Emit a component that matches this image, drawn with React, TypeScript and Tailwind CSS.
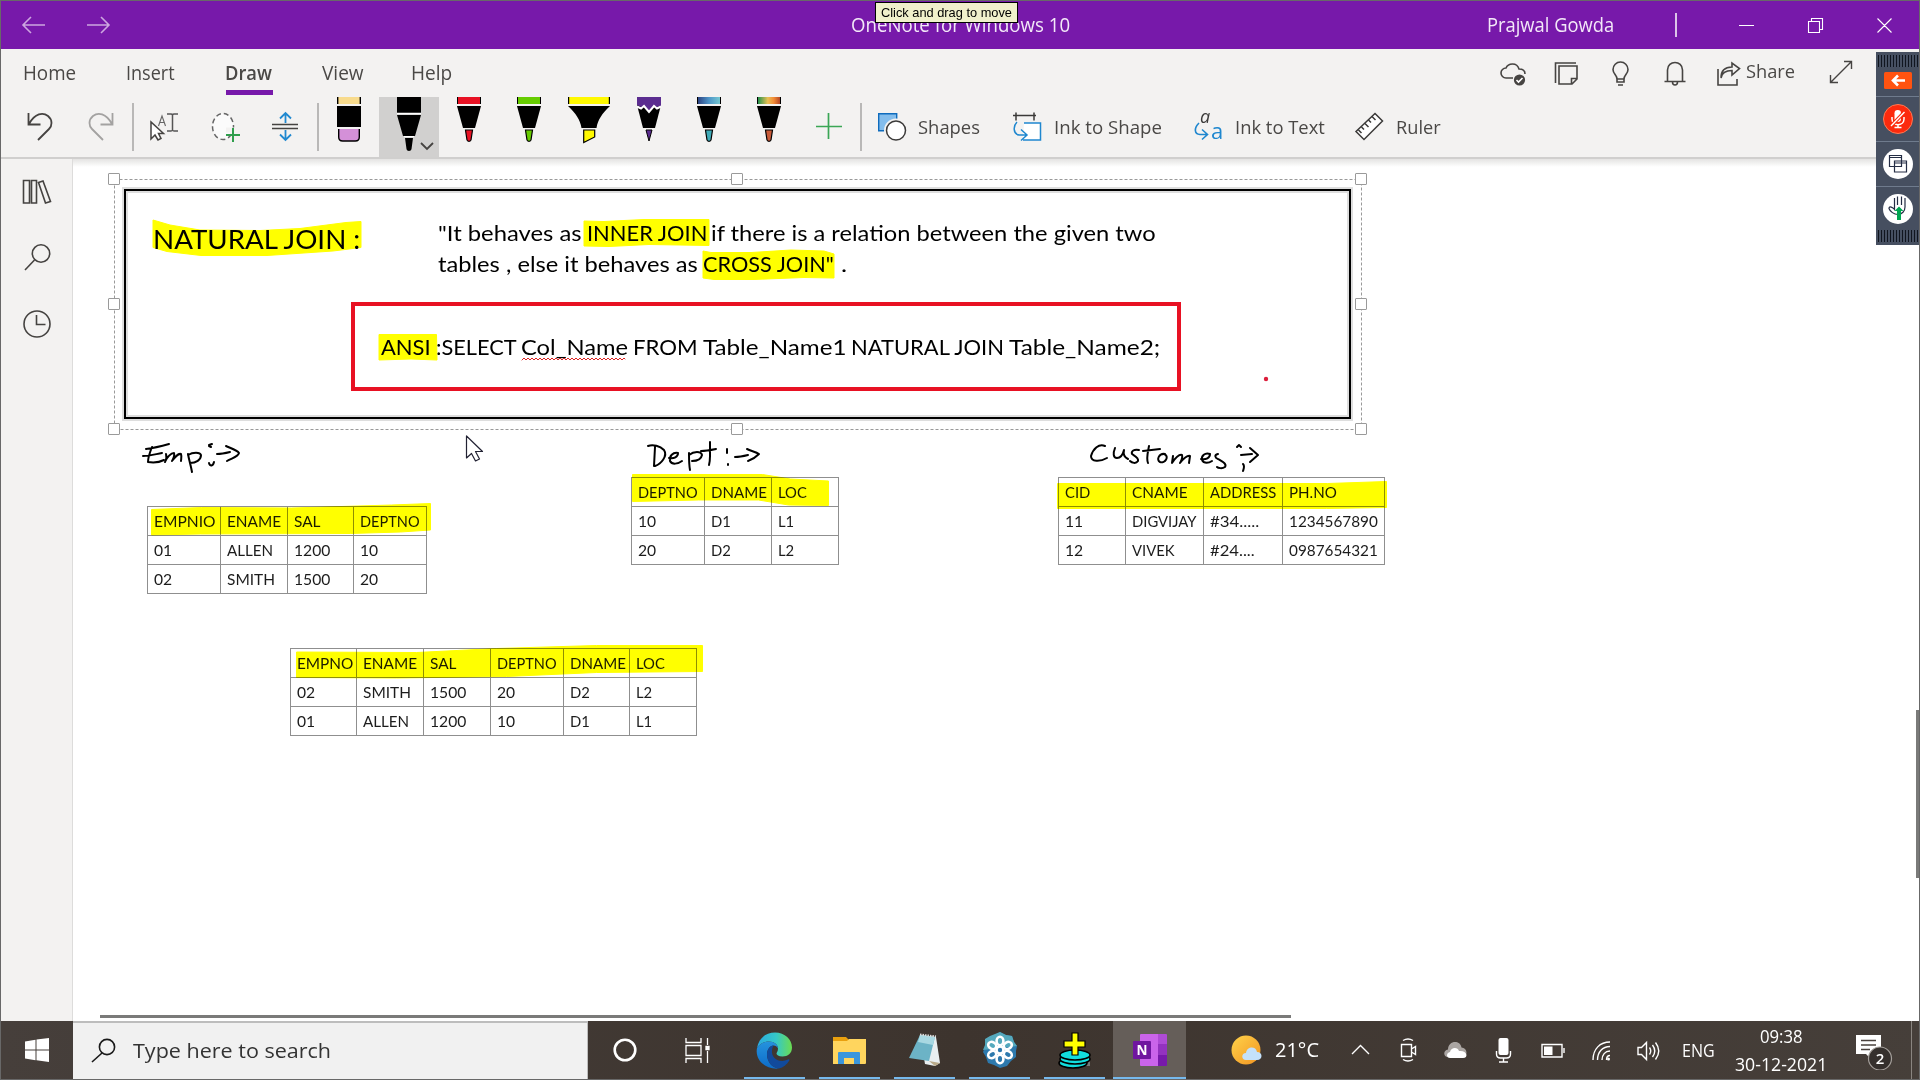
import { useLayoutEffect, useRef, useState, type ReactNode } from "react";

const UI = "font-['Open_Sans',sans-serif]";
const NOTE = "font-['Lato',sans-serif]";

/** One line of text condensed or widened to an exact advance width. */
function Fit({ w, className = "", children }: { w: number; className?: string; children: string }) {
  const ref = useRef<HTMLSpanElement>(null);
  const [scale, setScale] = useState(1);
  useLayoutEffect(() => {
    const measure = () => {
      if (ref.current && ref.current.offsetWidth) setScale(w / ref.current.offsetWidth);
    };
    measure();
    document.fonts?.ready.then(measure);
  }, [w, children]);
  return (
    <span className={`block shrink-0 whitespace-nowrap ${className}`} style={{ width: w }}>
      <span ref={ref} className="inline-block origin-left" style={{ transform: `scaleX(${scale})` }}>
        {children}
      </span>
    </span>
  );
}

/** An item placed freely on the note canvas, in window coordinates. */
function Place({ x, y, children }: { x: number; y: number; children: ReactNode }) {
  return (
    <div className="absolute" style={{ left: x - 73, top: y - 159 }}>
      {children}
    </div>
  );
}

function NoteLine({ x, base, w, big, children }: { x: number; base: number; w: number; big?: boolean; children: string }) {
  return (
    <Place x={x} y={base - (big ? 26 : 22)}>
      <Fit w={w} className={`${NOTE} text-black ${big ? "text-[26.5px] leading-[32px]" : "text-[21.5px] leading-[27px]"}`}>
        {children}
      </Fit>
    </Place>
  );
}

type Cell = [string, number];

function NoteTable({ cols, rows }: { cols: string; rows: Cell[][] }) {
  return (
    <div className={`grid border-t border-l border-[#8f8f8f] ${cols}`}>
      {rows.flat().map(([t, w], i) => (
        <div key={i} className="flex h-[29px] items-center border-r border-b border-[#8f8f8f] pl-[6px]">
          <Fit w={w} className={`${NOTE} text-[14.8px] leading-[20px] text-[#1c1c1c]`}>
            {t}
          </Fit>
        </div>
      ))}
    </div>
  );
}

function TitleBar() {
  return (
    <header className={`relative flex h-[48px] shrink-0 items-center bg-[#7719aa] text-[19.5px] text-[#f3e8f8] ${UI}`}>
      <svg className="ml-[20px]" width="90" height="20" viewBox="0 0 90 20" fill="none" stroke="#cda6e0" strokeWidth="1.6">
        <path d="M24 10H2M10 2L2 10l8 8M66 10h22M80 2l8 8-8 8" />
      </svg>
      <Fit w={219} className="ml-[740px]">OneNote for Windows 10</Fit>
      <Fit w={127} className="ml-[417px]">Prajwal Gowda</Fit>
      <div className="ml-[61px] h-6 w-[2px] bg-[#dcc4e8]" />
      <svg className="ml-[61px]" width="156" height="18" viewBox="1739 16 156 18" fill="none" stroke="#fff" strokeWidth="1.1">
        <path d="M1740 25.5h15M1809.500 21.500h11v11h-11zM1812.500 21v-2.500h11v11h-3M1878.500 18.500l14 14M1892.500 18.500l-14 14" />
      </svg>
      <div className="absolute top-px left-[874px] flex h-[21px] w-[117px] items-center border border-black bg-[#f0f0cb] pl-[5px] font-['Liberation_Sans',sans-serif] text-[13px] leading-[16px] text-black min-w-[143px]">
        <Fit w={131}>Click and drag to move</Fit>
      </div>
    </header>
  );
}

function TabRow() {
  return (
    <div className={`flex h-[48px] items-start pt-[10px] text-[19.5px] leading-[27px] text-[#4a4846] ${UI}`}>
      <Fit w={53} className="ml-[22px]">Home</Fit>
      <Fit w={49} className="ml-[50px]">Insert</Fit>
      <div className="ml-[50px] w-[48px]">
        <Fit w={47} className="font-semibold">Draw</Fit>
        <div className="mt-[4px] ml-[1px] h-[5px] w-[47px] bg-[#7719aa]" />
      </div>
      <Fit w={42} className="ml-[49px]">View</Fit>
      <Fit w={41} className="ml-[47px]">Help</Fit>
      <svg className="ml-[1047px] shrink-0" width="244" height="30" viewBox="1498 58 244 30" fill="none" stroke="#464442" strokeWidth="1.6">
        <path d="M1512 77h-7a5 5 0 0 1 0-10c2-5 11-6 13 1 5 0 6 3 6 5" />
        <circle cx="1518.500" cy="79" r="5.600" fill="#464442" stroke="none" />
        <path d="M1515.500 79l2 2 4-4" stroke="#fff" />
        <path d="M1575 62h-20.500v20M1558 65h18v13l-5 5h-13zM1570.500 83v-5.500h6" />
        <path d="M1616 78c0-4-4-5-4-9.500a7.500 7.500 0 0 1 15 0c0 4.500-4 5.500-4 9.500zM1616 78v3h7v-3M1617 84h5" />
        <path d="M1663.500 80.500h21M1666.500 80v-11c0-10 15-10 15 0v11M1671.500 81c0 4 5 4 5 0" />
        <path d="M1717 68v16h19v-6M1720 77c1-6 5-7.500 11-7.500v4.500l7.500-6.500-7.500-5.500v4c-8 0-11 5-11 11z" />
      </svg>
      <Fit w={49} className="ml-[3px] text-[19px] leading-[25px]">Share</Fit>
      <svg className="ml-[33px]" width="26" height="26" viewBox="1827 60 26 26" fill="none" stroke="#464442" strokeWidth="1.4">
        <path d="M1829.500 83.500l21-21M1843 62.500h7.500v7.500M1829.500 76v7.500h7.500" />
      </svg>
    </div>
  );
}

function Pen({ top, tip }: { top: string; tip: string }) {
  return (
    <svg width="60" height="60" viewBox="0 0 60 60">
      <path d="M18 0h24v7H18z" fill={top} />
      <path d="M18.500 0v7M41.500 0v7" stroke="#000" />
      <path d="M18 9h24l-6 22H24z" />
      <path d="M26.500 33h7l-1.500 10c-.3 1.700-3.700 1.700-4 0z" fill={tip} stroke="#000" strokeWidth="1.200" />
    </svg>
  );
}

function Label({ w, children }: { w: number; children: string }) {
  return (
    <Fit w={w} className={`text-[19px] leading-[27px] text-[#4a4846] ${UI}`}>
      {children}
    </Fit>
  );
}

function ToolRow() {
  return (
    <div className="flex h-[60px] items-start">
      <svg width="131" height="60" viewBox="1 97 131 60" fill="none" strokeWidth="1.800">
        <path d="M28.500 113v11.500h12M29 124c6-11 14-12 19-8 5 4 4 10 1 13l-11 11" stroke="#454341" />
        <path d="M112.500 113v11.500h-12M112 124c-6-11-14-12-19-8-5 4-4 10-1 13l11 11" stroke="#a3a2a1" />
      </svg>
      <div className="mt-[6px] h-[48px] w-[2px] bg-[#b9b8b7]" />
      <svg width="183" height="60" viewBox="134 97 183 60" fill="none" strokeWidth="1.500">
        <path d="M151 122v17l4-4 3 5 3-1.500-2.500-5h5z" stroke="#454341" fill="#fff" />
        <path d="M158.500 126l3.500-10 3.500 10M160 122.500h4.500" stroke="#666" strokeWidth="1.100" />
        <path d="M167 114h4q1 0 1.500 1 .5-1 1.500-1h4M172.500 115v15M167 131h4q1 0 1.500-1 .5 1 1.500 1h4" stroke="#555" />
        <ellipse cx="223" cy="126.500" rx="10.500" ry="13" stroke="#666" fill="#fbfbfb" strokeDasharray="5 3" />
        <path d="M226 132.500h14v-5h-14z" fill="#f3f2f1" />
        <path d="M226 135h14M233 128v14" stroke="#2f9e4c" strokeWidth="2" />
        <path d="M272 124.500h26M272 128.500h26" stroke="#454341" />
        <path d="M285.500 123v-10M280 118.500l5.500-5.500 5.500 5.500M285.500 130v10M280 134.500l5.500 5.500 5.500-5.500" stroke="#2189d0" strokeWidth="1.800" />
      </svg>
      <div className="mt-[6px] h-[48px] w-[2px] bg-[#b9b8b7]" />
      <svg width="60" height="60" viewBox="0 0 60 60">
        <path d="M18 0h24v7H18z" fill="#f8db8d" />
        <path d="M18.700 0v7M41.300 0v7" stroke="#000" strokeWidth="1.400" />
        <path d="M18 9h24v21H18z" />
        <path d="M19.700 32h20.600v8q0 4-4 4H23.700q-4 0-4-4z" fill="#d490d8" />
        <path d="M19.700 32v8q0 4 4 4h12.600q4 0 4-4v-8" fill="none" stroke="#000" strokeWidth="1.400" />
      </svg>
      <div className="bg-[#d1d0cf]">
        <svg width="60" height="60" viewBox="0 0 60 60">
          <path d="M18 0h24v16H18z" />
          <path d="M18 16.500h24M25 39.500h10" stroke="#fff" strokeWidth="1.500" />
          <path d="M18 18h24l-6 21H24zM26 41h8l-1.500 11c-.3 2.500-4.700 2.500-5 0z" />
          <path d="M42 46l6 6 6-6" fill="none" stroke="#454341" strokeWidth="1.800" />
        </svg>
      </div>
      <Pen top="#e81123" tip="#e81123" />
      <Pen top="#66cc00" tip="#66cc00" />
      <svg width="60" height="60" viewBox="0 0 60 60">
        <path d="M9 0h42v7H9z" fill="#fff900" />
        <path d="M9.600 0v7M50.400 0v7" stroke="#000" strokeWidth="1.200" />
        <path d="M9 9h42c-8 8-12 13-13.500 22h-15C21 22 17 17 9 9z" />
        <path d="M24.700 33h11v7l-11 5.500z" fill="#fff900" stroke="#000" strokeWidth="1.200" />
      </svg>
      <svg width="60" height="60" viewBox="0 0 60 60">
        <path d="M18 8l24 0-6 23H24z" />
        <path d="M18 0h24v9l-4 1-3-1-5 6-5-6-3 1-4-2z" fill="#5b2d90" />
        <path d="M18 9.500l4 2 3-2.500 5 6 5-6 3 2.500 4-2" fill="none" stroke="#fff" strokeWidth="2" />
        <path d="M27 33h6l-3 11z" fill="#5b2d90" stroke="#000" />
      </svg>
      <svg width="0" height="0">
        <defs>
          <linearGradient id="galaxy">
            <stop offset="0" stopColor="#2a3c7c" />
            <stop offset=".5" stopColor="#4d95c8" />
            <stop offset="1" stopColor="#79cdd3" />
          </linearGradient>
          <linearGradient id="rainbow">
            <stop offset="0" stopColor="#0f8d4c" />
            <stop offset=".45" stopColor="#e9c054" />
            <stop offset=".7" stopColor="#f28a35" />
            <stop offset="1" stopColor="#a83a22" />
          </linearGradient>
        </defs>
      </svg>
      <Pen top="url(#galaxy)" tip="#3fabb8" />
      <Pen top="url(#rainbow)" tip="#c85a38" />
      <svg width="61" height="60" viewBox="0 0 61 60">
        <path d="M17 29.500h26M29.500 16v26" stroke="#3aa655" strokeWidth="1.700" />
      </svg>
      <div className="mt-[6px] h-[48px] w-[2px] bg-[#b9b8b7]" />
      <div className="flex h-[60px] items-center">
        <svg className="ml-[15px]" width="32" height="34" viewBox="877 110 32 34">
          <path d="M878.700 113.700h18v17h-18z" fill="#83bdec" stroke="#0f6cbd" strokeWidth="1.400" />
          <circle cx="896" cy="130.500" r="12" fill="#f3f2f1" />
          <circle cx="896" cy="130.500" r="9.500" fill="#fff" stroke="#3b3a39" strokeWidth="1.500" />
        </svg>
        <div className="ml-[9px]"><Label w={62}>Shapes</Label></div>
        <svg className="ml-[31px]" width="32" height="34" viewBox="1011 110 32 34" fill="none" strokeWidth="1.500">
          <path d="M1013 115.500h23M1016 112.500v8M1034 112.500v8" stroke="#3b3a39" />
          <path d="M1024 123h16.500v17H1023" stroke="#1f87cf" fill="#fff" />
          <path d="M1017 122c-4 4-4 12 2 13h7M1021 129.500l6 5.500-6 5.500" stroke="#1f87cf" />
        </svg>
        <div className="ml-[11px]"><Label w={108}>Ink to Shape</Label></div>
        <div className="relative ml-[32px] h-[34px] w-[30px]">
          <span className="absolute -top-[7px] left-[6px] font-['Open_Sans',sans-serif] text-[18px] italic text-[#3b3a39]">a</span>
          <span className="absolute top-[4px] left-[17px] font-['Open_Sans',sans-serif] text-[22px] leading-[32px] text-[#1f87cf]">a</span>
          <svg className="absolute top-[12px] left-0" width="16" height="20" viewBox="0 0 16 20" fill="none" stroke="#1f87cf" strokeWidth="1.600">
            <path d="M5 1C0 6 0 12 6 12.500h7M8 7.500l5.500 5L8 17.500" />
          </svg>
        </div>
        <div className="ml-[11px]"><Label w={90}>Ink to Text</Label></div>
        <svg className="ml-[29px]" width="32" height="34" viewBox="1354 110 32 34" fill="#fff" stroke="#3b3a39" strokeWidth="1.500">
          <path d="M1375 113.500l7.500 7.500-18.500 18.500-8-8z" />
          <path d="M1372 116.500l3.500 3.500M1368.500 120l2.500 2.500M1365 123.500l3.500 3.500M1361.500 127l2.500 2.500M1358.500 130l3 3" />
        </svg>
        <div className="ml-[10px]"><Label w={45}>Ruler</Label></div>
      </div>
    </div>
  );
}

function Rail() {
  return (
    <aside className="w-[72px] shrink-0 border-r border-[#dddcdb] bg-[#f3f2f1]">
      <svg width="71" height="200" viewBox="1 159 71 200" fill="none" stroke="#454341" strokeWidth="1.600">
        <path d="M23.500 180.500h6v22.500h-6zM31.500 180.500h5v22.500h-5zM38.500 182.500l4.500-1.500 7.500 20.500-5 1.500z" />
        <circle cx="41" cy="253.500" r="8.700" />
        <path d="M34.500 260L25 270" />
        <circle cx="37" cy="324" r="13" />
        <path d="M36.500 315v9.500h9" />
      </svg>
    </aside>
  );
}

function Canvas() {
  const handles: [number, number][] = [
    [114, 179], [737, 179], [1361, 179], [114, 304], [1361, 304], [114, 429], [737, 429], [1361, 429],
  ];
  return (
    <main className="relative flex-1 overflow-hidden bg-white">
      <Place x={126} y={191}>
        <div className="h-[226px] w-[1223px] outline-2 outline-black ring-[4px] ring-[#dedede] shadow-[inset_0_0_0_2px_#dedede]" />
      </Place>
      <Place x={351} y={302}>
        <div className="h-[89px] w-[830px] border-4 border-[#e81123]" />
      </Place>

      <NoteLine x={153} base={249} w={207} big>NATURAL JOIN :</NoteLine>
      <NoteLine x={438} base={242} w={144}>"It behaves as</NoteLine>
      <NoteLine x={587} base={242} w={120}>INNER JOIN</NoteLine>
      <NoteLine x={711} base={242} w={445}>if there is a relation between the given two</NoteLine>
      <NoteLine x={438} base={273} w={260}>tables , else it behaves as</NoteLine>
      <NoteLine x={703} base={273} w={131}>CROSS JOIN"</NoteLine>
      <NoteLine x={841} base={273} w={6}>.</NoteLine>
      <NoteLine x={381} base={356} w={50}>ANSI</NoteLine>
      <NoteLine x={436} base={356} w={81}>:SELECT</NoteLine>
      <NoteLine x={521} base={356} w={107}>Col_Name</NoteLine>
      <NoteLine x={633} base={356} w={65}>FROM</NoteLine>
      <NoteLine x={703} base={356} w={144}>Table_Name1</NoteLine>
      <NoteLine x={851} base={356} w={153}>NATURAL JOIN</NoteLine>
      <NoteLine x={1009} base={356} w={151}>Table_Name2;</NoteLine>

      <Place x={147} y={506}>
        <NoteTable
          cols="grid-cols-[73px_67px_66px_73px]"
          rows={[
            [["EMPNIO", 61], ["ENAME", 54], ["SAL", 26], ["DEPTNO", 60]],
            [["01", 18], ["ALLEN", 46], ["1200", 36], ["10", 18]],
            [["02", 18], ["SMITH", 48], ["1500", 36], ["20", 18]],
          ]}
        />
      </Place>
      <Place x={631} y={477}>
        <NoteTable
          cols="grid-cols-[73px_67px_67px]"
          rows={[
            [["DEPTNO", 60], ["DNAME", 56], ["LOC", 29]],
            [["10", 18], ["D1", 20], ["L1", 16]],
            [["20", 18], ["D2", 20], ["L2", 16]],
          ]}
        />
      </Place>
      <Place x={1058} y={477}>
        <NoteTable
          cols="grid-cols-[67px_78px_79px_102px]"
          rows={[
            [["CID", 25], ["CNAME", 55], ["ADDRESS", 66], ["PH.NO", 48]],
            [["11", 18], ["DIGVIJAY", 65], ["#34.....", 49], ["1234567890", 89]],
            [["12", 18], ["VIVEK", 43], ["#24....", 45], ["0987654321", 89]],
          ]}
        />
      </Place>
      <Place x={290} y={648}>
        <NoteTable
          cols="grid-cols-[66px_67px_67px_73px_66px_67px]"
          rows={[
            [["EMPNO", 56], ["ENAME", 54], ["SAL", 26], ["DEPTNO", 60], ["DNAME", 56], ["LOC", 29]],
            [["02", 18], ["SMITH", 48], ["1500", 36], ["20", 18], ["D2", 20], ["L2", 16]],
            [["01", 18], ["ALLEN", 46], ["1200", 36], ["10", 18], ["D1", 20], ["L1", 16]],
          ]}
        />
      </Place>

      {/* highlighter strokes */}
      <svg className="absolute top-0 left-0 mix-blend-multiply" width="1846" height="862" viewBox="73 159 1846 862" fill="#ffff00" stroke="#ffff00" strokeLinejoin="round">
        <path d="M153 220l17 5 30 5 60 .5 40-2 46-6 15-1v26l-28 3.500-66 4.500h-66l-34-4-14-4z" />
        <path d="M584 221l20 .5 40-2 65 0v26l-60-1-40 2-25-.5z" />
        <path d="M703 251l8 1.500h40l40-2.500 33 1 10 3v24l-30-.5-50 2-40 0-11-1.500z" />
        <path d="M379 334.500h57.500l.5 25.500-26-1-32 1z" />
        <path d="M151.500 509.500l50-2 90 .5 100-3 39-1.500v26.500l-30 2-50 1.500-150 .5-49 1z" />
        <path d="M632.500 474.500h130l28 4.500 38 2v24.500l-40-.5-30-5-60 0-66 1.500z" />
        <path d="M1057.500 483.500h270l59-2v26l-60 1-269 0z" />
        <path d="M296.500 652l120 .5 80-4 100-3h106v26l-106 1-90 4-110 1.500-100-.5z" />
      </svg>

      {/* pen ink */}
      <svg className="absolute top-0 left-0" width="1846" height="862" viewBox="73 159 1846 862" fill="none" strokeLinecap="round" strokeLinejoin="round">
        <g stroke="#000" strokeWidth="2">
          <path d="M146 449c8-1 16-3 23-5M152 447c-2 5-4 11-4 15 6 1 12 0 16-2M143 456c7 0 13-2 19-3" />
          <path d="M166 454c1 3 0 6-1 8 2-5 6-9 9-9 1 3-1 6-2 8 3-4 6-8 9-7 1 3 0 5 0 7M188 454c1 6 3 12 4 18M188 455c5-3 12-3 13 0 0 5-5 8-11 8" />
          <path d="M209 445l3-1M209 446l2 1M209 463c1 4 4 3 5-1M217 454c5 0 9-1 13-2M226 446c4 2 11 4 13 7-1 4-7 5-12 8" />
          <path d="M648 446c5-2 12 0 16 4 4 6-3 14-9 16M655 447l-1 19M669 458c5 1 9-1 9-5-5-1-9 3-8 8 2 4 8 3 12 0M689 453c0 6 0 12 1 17M689 455c5-4 12-4 13 0-1 5-6 6-10 6M710 442v14c0 5-1 9-1 9M701 451c5 0 10-1 15-2" />
          <path d="M727 449v4M728 464v1M735 457c5 0 9-1 13-2M747 449c4 2 9 3 12 5-3 3-8 6-11 7" />
          <path d="M1105 446c-6-3-12 3-14 10 0 6 9 6 16 2M1115 448c-2 5-2 10 2 10 4 0 6-4 7-8-1 4 0 7 4 9M1139 450c-5-1-8 1-7 4 3 2 7 4 6 7-2 3-6 2-8 0M1149 446c-1 6-3 12-1 17M1143 451l17-2M1165 454c-6-1-9 6-5 8 5 2 10-6 4-8M1173 456l-1 7c4-6 7-9 10-8 1 3-1 6-2 8 4-5 7-8 10-7l-1 7" />
          <path d="M1201 459c5 1 9-1 9-5-5-2-9 2-8 6 2 4 7 3 10 1M1218 454c-4 1-3 4 0 5 5 3 9 5 7 8-3 2-7 1-8 0M1237 447l2-2 2 2M1241 455l11-1M1250 448l8 7-8 7M1243 464c2 2 1 4 0 7" />
        </g>
        <path d="M522 360l2-2 2 2 2-2 2 2 2-2 2 2 2-2 2 2 2-2 2 2 2-2 2 2 2-2 2 2 2-2 2 2 2-2 2 2 2-2 2 2 2-2 2 2 2-2 2 2 2-2 2 2 2-2 2 2 2-2 2 2 2-2 2 2 2-2 2 2 2-2 2 2 2-2 2 2 2-2 2 2 2-2 2 2 2-2 2 2 2-2 2 2 2-2 2 2 2-2 2 2 2-2 1 1" stroke="#d22" strokeWidth="1" />
        <circle cx="1266" cy="379" r="2.200" fill="#dc1e3c" />
        <path d="M114.500 179.500h1247v250h-1247z" stroke="#999" strokeDasharray="3 2" strokeLinecap="butt" />
        <path d="M466.500 436v22l5-4.500 4 7.500 4-2-4-7.500h7z" fill="#fff" stroke="#223" strokeWidth="1.200" />
      </svg>
      {handles.map(([x, y]) => (
        <Place key={`${x}-${y}`} x={x - 6} y={y - 6}>
          <div className="size-[12px] rounded-[1px] border border-[#9a9a9a] bg-white" />
        </Place>
      ))}

      <div className="absolute bottom-[3px] left-[27px] h-[3px] w-[1191px] bg-[#7a7a79]" />
      <div className="absolute top-[551px] right-0 h-[168px] w-[3px] bg-[#7a7a79]" />
      <div className="absolute top-0 left-0 h-[8px] w-full bg-linear-to-b from-[#e4e3e2] to-white/0" />
    </main>
  );
}

function Grip() {
  return <div className="mx-[2px] h-[12px] self-stretch bg-[repeating-linear-gradient(90deg,#10151f_0_1px,#465062_1px_3px)]" />;
}

function MeetingDock() {
  return (
    <div className="absolute top-[51px] left-[1875px] flex h-[193px] w-[44px] flex-col items-center bg-[#464f60] pt-[3px]">
      <Grip />
      <div className="flex h-[30px] w-full items-center justify-center border-b border-[#6f7b8d]">
        <svg width="28" height="18" viewBox="0 0 28 18" className="mb-[1px]">
          <rect width="28" height="17" rx="1.500" fill="#ff5310" />
          <path d="M21 8.500H9M14 3.500l-5 5 5 5" fill="none" stroke="#fff" strokeWidth="2.600" />
        </svg>
      </div>
      <div className="flex h-[45px] w-full items-center justify-center border-b border-[#6f7b8d]">
        <svg width="30" height="30" viewBox="0 0 30 30">
          <circle cx="15" cy="15" r="14.500" fill="#fc2a0d" stroke="#ff7a54" />
          <rect x="11.500" y="6" width="6.500" height="12" rx="3.200" fill="#fff" />
          <path d="M9 13v2c0 7.500 12 7.500 12 0v-2M15 20v3.500M11.500 23.500h7" fill="none" stroke="#fff" strokeWidth="1.500" />
          <path d="M8 22L21.500 8" stroke="#fc2a0d" strokeWidth="3.500" />
          <path d="M8 22L21.500 8" stroke="#fff" strokeWidth="1.400" />
        </svg>
      </div>
      <div className="flex h-[45px] w-full items-center justify-center border-b border-[#6f7b8d]">
        <svg width="30" height="30" viewBox="0 0 30 30" fill="#fff" stroke="#242d44" strokeWidth="1.200">
          <circle cx="15" cy="15" r="15" stroke="none" />
          <path d="M6.500 6.500h12v11h-12zM6.500 8.500h12M11.500 12h12v11h-12zM11.500 14h12" />
        </svg>
      </div>
      <div className="flex h-[43px] w-full items-center justify-center">
        <svg width="30" height="30" viewBox="0 0 30 30" fill="none" stroke="#242d44" strokeWidth="1.200">
          <circle cx="15" cy="15" r="15" fill="#fff" stroke="none" />
          <path d="M11.500 12V4M14.500 11V2.500M18.500 11V2.500M22 4v9c0 4-3 7.500-7 7.500-4 0-8-3-9-6 0-3 4-1 5.500 1V12" />
          <path d="M16 12.500l4.500 4.500h-2.500v9h-4v-9h-2.500z" fill="#00a651" stroke="none" />
        </svg>
      </div>
      <Grip />
    </div>
  );
}

function App0({ w, line = true, active = false, children }: { w?: string; line?: boolean; active?: boolean; children: ReactNode }) {
  return (
    <div className={`flex h-full flex-col items-center ${w ?? "w-[75px]"} ${active ? "bg-[#655e59]" : ""}`}>
      <div className="flex flex-1 items-center pt-[2px]">{children}</div>
      <div className={`h-[2px] ${active ? "w-full" : "w-[61px]"} ${line ? "bg-[#76b9ed]" : ""}`} />
    </div>
  );
}

function Taskbar() {
  return (
    <footer className={`flex h-[58px] shrink-0 items-center bg-linear-to-r from-[#463f3b] via-[#3d342e] to-[#463f3a] text-white ${UI}`}>
      <div className="flex w-[72px] items-center justify-center">
        <svg width="24" height="24" viewBox="0 0 24 24" fill="#fff">
          <path d="M0 3.500l10.500-1.700v9.700H0zM11.500 1.600L24 0v11.500H11.500zM0 12.500h10.500v9.700L0 20.500zM11.500 12.500H24V24l-12.500-1.700z" />
        </svg>
      </div>
      <div className="flex h-full w-[515px] items-center border-t-2 border-r border-[#bdbdbd] bg-[#f1f1f1]">
        <svg className="ml-[18px]" width="26" height="26" viewBox="0 0 26 26" fill="none" stroke="#1a1a1a" strokeWidth="1.600">
          <circle cx="16" cy="9" r="7.600" />
          <path d="M11 15L1 24" />
        </svg>
        <Fit w={198} className="ml-[16px] text-[20px] leading-[28px] text-[#333]">Type here to search</Fit>
      </div>
      <App0 w="w-[74px]" line={false}>
        <svg width="26" height="26" viewBox="0 0 26 26"><circle cx="13" cy="13" r="10.300" fill="none" stroke="#fff" strokeWidth="2.600" /></svg>
      </App0>
      <App0 w="w-[70px]" line={false}>
        <svg width="25" height="25" viewBox="0 0 25 25" fill="none" stroke="#fff" strokeWidth="1.300">
          <path d="M1 0v4.500h15V0M1 7.500h15v10H1zM1 25v-4.500h15V25M22.500 0v7M22.500 13v12" />
          <path d="M21 8.500h3v3h-3z" fill="#fff" />
        </svg>
      </App0>
      <div className="ml-[5px] flex h-full">
        <App0>
          <svg width="37" height="37" viewBox="0 0 37 37">
            <defs>
              <linearGradient id="edgeTop"><stop offset="0" stopColor="#2aa9e0" /><stop offset=".55" stopColor="#35c8c8" /><stop offset="1" stopColor="#6bdc51" /></linearGradient>
              <linearGradient id="edgeSide" x2="0" y2="1"><stop offset="0" stopColor="#2593dd" /><stop offset="1" stopColor="#0d6cc9" /></linearGradient>
            </defs>
            <path d="M1 16C3 5 11 .5 19 .5c10 0 17 7 17 15 0 6-4.500 9-9.500 9-4 0-6-1.500-6-3 0-1 1.500-2 1.500-5 0-4-4-7-9-7-5 0-9 2-12 6.500z" fill="url(#edgeTop)" />
            <path d="M1 16c3-4.500 7-6.500 12-6.500 5 0 9 3 9 7-1-2-2.500-3-4.500-3-3.500 0-6.500 4-6.500 9 0 7 5 13.500 12 14C11 38-1.500 29 1 16z" fill="url(#edgeSide)" />
            <path d="M17.500 13.500c-4.500.500-6.500 5-6.500 9 0 7 5 13.500 12 14 4-1 8-4 10-7.500 1-1.500 0-2-1-1.500-8 4-17-1-16-9 .2-2 .8-3.500 1.500-5z" fill="#114a9c" />
          </svg>
        </App0>
        <App0>
          <svg width="33" height="29" viewBox="0 0 33 29">
            <path d="M0 1h13l3 3v6H0z" fill="#e9a00e" />
            <path d="M0 5h14l2-2h17v24q0 1-1 1H0z" fill="#ffd55e" />
            <path d="M5 28V17q0-1 1-1h20q1 0 1 1v11h-6v-6H11v6z" fill="#3a96dd" />
          </svg>
        </App0>
        <App0>
          <svg width="34" height="34" viewBox="0 0 34 34">
            <path d="M12 2l16 2 4 26-5 3-10-2z" fill="#e9eef0" />
            <path d="M12 2l15 2-6 24L1 25z" fill="#6cb3c6" />
            <path d="M12 2l15 2-2 8-15-3z" fill="#a8d8e2" />
            <path d="M21 28l11 2-5 3z" fill="#b9a988" />
            <path d="M12 1.500l16 2" stroke="#ddd" strokeWidth="2" strokeDasharray="1.500 1" />
          </svg>
        </App0>
        <App0>
          <svg width="34" height="36" viewBox="-17 -18 34 36">
            <path d="M0-18l6 3 6 1 2 6 3 4-1 5 0 6-5 4-4 5-7 2-6-3-6-2-2-6-3-5 2-5 0-6 5-3z" fill="#2d79ad" />
            <path d="M0-18l6 3 6 1 2 6 3 4-34 4 2-5 0-6 5-3z" fill="#55a9bd" />
            <g fill="none" stroke="#fff" strokeWidth="2.600">
              {[0, 60, 120, 180, 240, 300].map((a) => (
                <ellipse key={a} cx="0" cy="-9" rx="3.400" ry="4.200" transform={`rotate(${a})`} />
              ))}
              <circle r="3.500" />
            </g>
          </svg>
        </App0>
        <App0>
          <svg width="34" height="37" viewBox="0 0 34 37">
            <path d="M7 27h25v7H20z" fill="#777" />
            <g fill="#12dede" stroke="#000" strokeWidth="1.600">
              <ellipse cx="15" cy="31" rx="14" ry="5" />
              <ellipse cx="17" cy="27" rx="15" ry="5" />
              <ellipse cx="17" cy="23" rx="15" ry="5" />
            </g>
            <path d="M14 1h6v8h7v6h-7v8h-6v-8H6V9h8z" fill="#ff0" stroke="#000" strokeWidth="1.200" />
          </svg>
        </App0>
      </div>
      <div className="ml-[1px] h-full">
        <App0 w="w-[73px]" active>
          <svg width="36" height="34" viewBox="0 0 36 34">
            <path d="M9 1h17v32H9q-1 0-1-1V2q0-1 1-1z" fill="#ca64ea" />
            <path d="M26 1h8q1 0 1 1v9h-9z" fill="#ae4bd5" />
            <path d="M26 11h9v11h-9z" fill="#9332bf" />
            <path d="M26 22h9v10q0 1-1 1h-8z" fill="#7719aa" />
            <rect x="1" y="8" width="18" height="18" rx="1" fill="#6f169f" />
            <text x="10" y="22" textAnchor="middle" fontFamily="Open Sans" fontWeight="700" fontSize="13.500" fill="#fff">N</text>
          </svg>
        </App0>
      </div>
      <svg className="ml-[45px]" width="32" height="32" viewBox="0 0 32 32">
        <defs><linearGradient id="sun" x2="1" y2="1"><stop offset="0" stopColor="#ffd34a" /><stop offset="1" stopColor="#f29422" /></linearGradient></defs>
        <circle cx="15" cy="16" r="14.500" fill="url(#sun)" />
        <path d="M15 26c-5 0-5-7 0-7 1-7 10-7 11-1 6 0 6 8 0 8z" fill="#c4e1fa" />
      </svg>
      <Fit w={44} className="ml-[12px] text-[20px] leading-[28px]">21°C</Fit>
      <svg className="ml-[30px] shrink-0" width="315" height="30" viewBox="1350 1036 315 30" fill="none" stroke="#fff" strokeWidth="1.400">
        <path d="M1353 1055l8.500-8.500 8.500 8.500" />
        <path d="M1402.500 1045.500h10v12h-10zM1412.500 1050l4-2.500v8l-4-2.500M1404 1041.500q5-3 10 0M1404 1060.500q5 3 10 0" />
        <path d="M1449 1058c-5 0-5-7 0-7.500 0-9 12-10 13.500-2 6 0 7 9.500 1 9.500z" fill="#aaa5a2" stroke="none" />
        <path d="M1451 1059c-4 0-4-5 0-6 1-5 8-5 9-1 8-1 10 7 4 7z" fill="#fff" stroke="none" />
        <rect x="1499.500" y="1039" width="10" height="17" rx="2" fill="#fff" stroke="none" />
        <path d="M1497.500 1052v3q0 4 4 4h6q4 0 4-4v-3M1504.500 1059v4M1500 1063h9" />
        <path d="M1543 1045.500h20v12.500h-20zM1565 1049v5" />
        <path d="M1545 1047.500h8.500v8.500h-8.500z" fill="#fff" stroke="none" />
        <path d="M1594 1061c0-11 7-18 17-18M1598.500 1061c0-8 5-13.500 12.500-13.500M1603 1061c0-5 3-9 8-9M1607.500 1061c0-2 1-4.500 3.500-4.500" />
        <circle cx="1609.500" cy="1060" r="1.500" fill="#fff" stroke="none" />
        <path d="M1639 1048.500h3.500l5-5v17l-5-5h-3.500zM1650.500 1048.500q2.500 3.500 0 7M1653.500 1046q4.500 6 0 12M1656.500 1043.500q6.500 8.500 0 17" />
      </svg>
      <Fit w={33} className="ml-[18px] text-[18px] leading-[28px]">ENG</Fit>
      <div className="ml-[20px] flex w-[92px] flex-col items-center text-[17.500px] leading-[28px]">
        <Fit w={43}>09:38</Fit>
        <Fit w={92}>30-12-2021</Fit>
      </div>
      <svg className="ml-[27px]" width="42" height="40" viewBox="1857 1034 42 40">
        <path d="M1859 1039h25v19h-10v5l-5-5h-10z" fill="#fff" />
        <path d="M1864 1044.500h15M1864 1049h15M1864 1053.500h9" stroke="#4a423d" strokeWidth="1.300" />
        <circle cx="1883" cy="1062.500" r="11.500" fill="#35302d" stroke="#a5a09c" strokeWidth="1.200" />
        <text x="1883" y="1068" textAnchor="middle" fontFamily="Open Sans" fontWeight="600" fontSize="15" fill="#fff">2</text>
      </svg>
      <div className="ml-[15px] h-full w-px bg-[#8a8580]" />
    </footer>
  );
}

export default function App() {
  return (
    <div className="relative flex h-[1080px] w-[1920px] flex-col overflow-hidden border border-[#686868]">
      <TitleBar />
      <div className="h-[110px] shrink-0 border-b-2 border-[#d0cfce] bg-[#f3f2f1]">
        <TabRow />
        <ToolRow />
      </div>
      <div className="flex flex-1">
        <Rail />
        <Canvas />
      </div>
      <Taskbar />
      <MeetingDock />
    </div>
  );
}
